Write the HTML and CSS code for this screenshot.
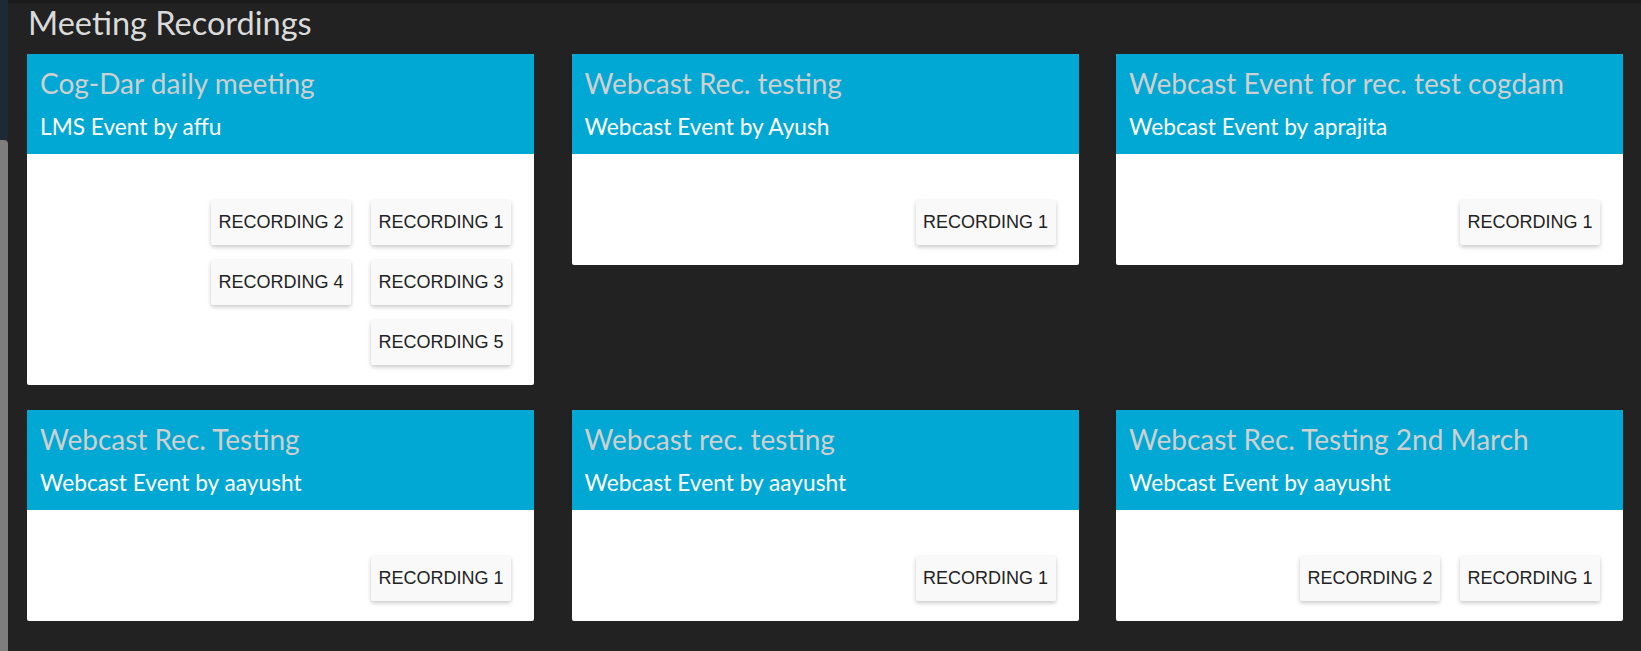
FILE: index.html
```html
<!DOCTYPE html>
<html lang="en">
<head>
<meta charset="utf-8">
<title>Meeting Recordings</title>
<link rel="stylesheet" href="styles.css">
</head>
<body>
<div class="page">
  <aside class="side-strip">
    <div class="side-top"></div>
    <div class="side-thumb"></div>
  </aside>
  <main class="main">
    <h1 class="page-title">Meeting Recordings</h1>
    <div class="grid">
      <section class="card">
        <header class="card-head">
          <h2 class="card-title">Cog-Dar daily meeting</h2>
          <p class="card-sub">LMS Event by affu</p>
        </header>
        <div class="card-body">
          <button class="rec">RECORDING 1</button>
          <button class="rec">RECORDING 2</button>
          <button class="rec">RECORDING 3</button>
          <button class="rec">RECORDING 4</button>
          <button class="rec">RECORDING 5</button>
        </div>
      </section>
      <section class="card">
        <header class="card-head">
          <h2 class="card-title">Webcast Rec. testing</h2>
          <p class="card-sub">Webcast Event by Ayush</p>
        </header>
        <div class="card-body">
          <button class="rec">RECORDING 1</button>
        </div>
      </section>
      <section class="card">
        <header class="card-head">
          <h2 class="card-title">Webcast Event for rec. test cogdam</h2>
          <p class="card-sub">Webcast Event by aprajita</p>
        </header>
        <div class="card-body">
          <button class="rec">RECORDING 1</button>
        </div>
      </section>
      <section class="card">
        <header class="card-head">
          <h2 class="card-title">Webcast Rec. Testing</h2>
          <p class="card-sub">Webcast Event by aayusht</p>
        </header>
        <div class="card-body">
          <button class="rec">RECORDING 1</button>
        </div>
      </section>
      <section class="card">
        <header class="card-head">
          <h2 class="card-title">Webcast rec. testing</h2>
          <p class="card-sub">Webcast Event by aayusht</p>
        </header>
        <div class="card-body">
          <button class="rec">RECORDING 1</button>
        </div>
      </section>
      <section class="card">
        <header class="card-head">
          <h2 class="card-title">Webcast Rec. Testing 2nd March</h2>
          <p class="card-sub">Webcast Event by aayusht</p>
        </header>
        <div class="card-body">
          <button class="rec">RECORDING 1</button>
          <button class="rec">RECORDING 2</button>
        </div>
      </section>
    </div>
  </main>
</div>
</body>
</html>
```

FILE: styles.css
```css
* {
  box-sizing: border-box;
}

html, body {
  margin: 0;
  padding: 0;
  background: #222222;
  height: 100%;
  overflow: hidden;
}

.page {
  display: flex;
  min-height: 651px;
  font-family: Lato, "Open Sans", sans-serif;
}

.side-strip {
  width: 8px;
  display: flex;
  flex-direction: column;
  flex: none;
}

.side-top {
  height: 140px;
  background: #1d2a33;
}

.side-thumb {
  flex: 1;
  background: #7e7e7e;
  border-top-right-radius: 4px;
}

.main {
  flex: 1;
  border-top: 3px solid #1b1b1b;
  padding: 0 18px 0 19px;
}

.page-title {
  margin: 0 0 12px 1px;
  font-size: 32.5px;
  line-height: 39px;
  font-weight: 400;
  color: #dadada;
}

.grid {
  display: grid;
  grid-template-columns: repeat(3, 1fr);
  column-gap: 37.5px;
  row-gap: 25.5px;
  align-items: start;
}

.card {
  border-radius: 2px;
  overflow: hidden;
  background: #ffffff;
}

.card-head {
  height: 100px;
  background: #01a8d3;
  padding: 14px 14px 0 13px;
}

.card-title {
  margin: 0;
  font-size: 28px;
  line-height: 30px;
  font-weight: 400;
  color: #cfcfcf;
  white-space: nowrap;
}

.card-sub {
  margin: 16px 0 0 0;
  font-size: 22.7px;
  line-height: 26px;
  color: #ffffff;
}

.card-body {
  display: flex;
  flex-direction: row-reverse;
  flex-wrap: wrap;
  column-gap: 20px;
  row-gap: 15px;
  padding: 46px 23px 19.5px 40px;
}

.rec {
  width: 140px;
  height: 45px;
  padding: 0;
  border: none;
  border-radius: 2px;
  background: #f9f9f9;
  box-shadow: 0 2px 4px rgba(0, 0, 0, 0.22);
  font-family: "Liberation Sans", Arial, sans-serif;
  font-size: 18px;
  line-height: 45px;
  color: #222222;
  text-align: center;
}
```
